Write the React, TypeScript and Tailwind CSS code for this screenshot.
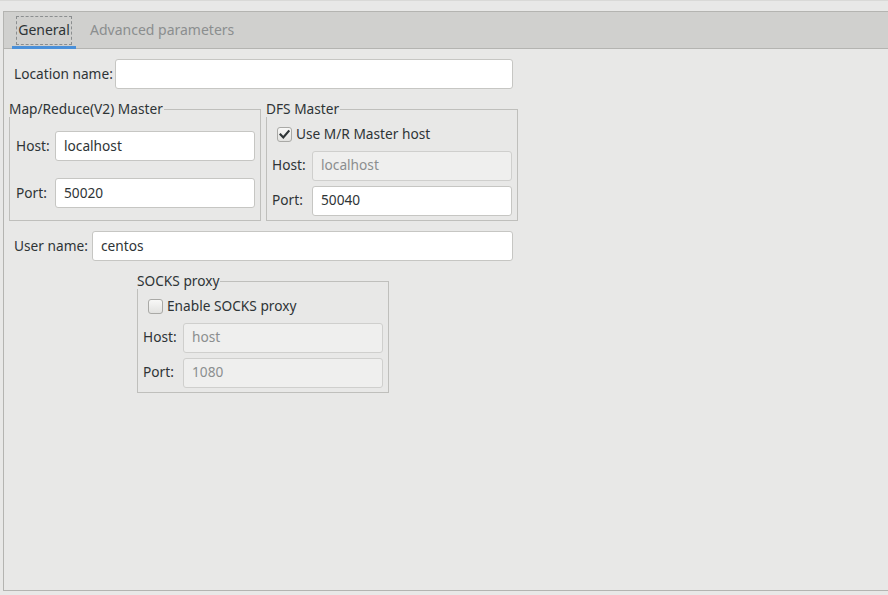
import React from "react";

const font = { fontFamily: '"Noto Sans", "DejaVu Sans", sans-serif' };

function Field({
  value,
  disabled,
  className,
}: {
  value: string;
  disabled?: boolean;
  className: string;
}) {
  return (
    <div
      className={
        "shrink-0 h-[30px] rounded-[3px] border flex items-center pl-[8px] text-[13.7px] " +
        (disabled
          ? "bg-[#efefee] border-[#cfcfcd] text-[#8b8e8f] "
          : "bg-white border-[#c6c6c3] text-[#2e3436] ") +
        className
      }
    >
      {value}
    </div>
  );
}

function Check({ checked }: { checked?: boolean }) {
  return (
    <div className="shrink-0 w-[15px] h-[15px] rounded-[3px] border border-[#a9a9a6] bg-gradient-to-b from-[#f8f8f7] to-[#e2e2e0] flex items-center justify-center">
      {checked && (
        <svg width="11" height="11" viewBox="0 0 11 11">
          <path d="M1.5 5.5 L4.3 8.4 L9.6 2.2" fill="none" stroke="#2e3436" strokeWidth="2.2" strokeLinecap="square" />
        </svg>
      )}
    </div>
  );
}

function Group({
  title,
  children,
}: {
  title: string;
  children: React.ReactNode;
}) {
  return (
    <div className="relative shrink-0 border border-[#bfbfbc] w-[252px] h-[112px]">
      <span className="absolute top-[-9px] left-[-1px] bg-[#e8e8e7] pr-[1px] leading-[16px] text-[13.7px] text-[#2e3436] whitespace-nowrap">
        {title}
      </span>
      {children}
    </div>
  );
}

function Label({ text, w }: { text: string; w: string }) {
  return <span className={"shrink-0 whitespace-nowrap " + w}>{text}</span>;
}

export default function App() {
  return (
    <div
      style={font}
      className="w-[888px] h-[595px] bg-[#e8e8e7] border-t border-[#d9d9d7] overflow-hidden text-[#2e3436]"
    >
      <div className="ml-[3px] mt-[10px] w-[885px] h-[580px] border-l border-t border-b border-[#b4b4b1]">
        {/* tab bar */}
        <div className="h-[37px] bg-[#d0d0ce] border-b border-[#b4b4b1] flex text-[14px]">
          <div className="relative ml-[8px] w-[64px] h-full flex items-center justify-center">
            <div className="absolute left-[4px] top-[4px] w-[56px] h-[29px] border border-dashed border-[#8b8e8f]" />
            <span className="text-[#2e3436] leading-none">General</span>
            <div className="absolute left-0 right-0 bottom-[-1px] h-[3px] bg-[#4a90d9]" />
          </div>
          <div className="ml-[8px] px-[6px] h-full flex items-center">
            <span className="text-[#8b8e8f] leading-none whitespace-nowrap">Advanced parameters</span>
          </div>
        </div>

        {/* content */}
        <div className="pt-[10px] text-[13.7px]">
          <div className="flex items-center ml-[10px]">
            <Label text="Location name:" w="w-[101px]" />
            <Field value="" className="w-[398px]" />
          </div>

          <div className="flex gap-[5px] ml-[5px] mt-[20px]">
            <Group title="Map/Reduce(V2) Master">
              <div className="flex items-center ml-[6px] mt-[21px]">
                <Label text="Host:" w="w-[39px]" />
                <Field value="localhost" className="w-[200px]" />
              </div>
              <div className="flex items-center ml-[6px] mt-[17px]">
                <Label text="Port:" w="w-[39px]" />
                <Field value="50020" className="w-[200px]" />
              </div>
            </Group>
            <Group title="DFS Master">
              <div className="flex items-center ml-[10px] mt-[14px] gap-[4px]">
                <Check checked />
                <span className="whitespace-nowrap">Use M/R Master host</span>
              </div>
              <div className="flex items-center ml-[5px] mt-[6px]">
                <Label text="Host:" w="w-[40px]" />
                <Field value="localhost" disabled className="w-[200px]" />
              </div>
              <div className="flex items-center ml-[5px] mt-[5px]">
                <Label text="Port:" w="w-[40px]" />
                <Field value="50040" className="w-[200px]" />
              </div>
            </Group>
          </div>

          <div className="flex items-center ml-[10px] mt-[10px]">
            <Label text="User name:" w="w-[78px]" />
            <Field value="centos" className="w-[421px]" />
          </div>

          <div className="flex ml-[133px] mt-[20px]">
            <Group title="SOCKS proxy">
              <div className="flex items-center ml-[10px] mt-[14px] gap-[4px]">
                <Check />
                <span className="whitespace-nowrap">Enable SOCKS proxy</span>
              </div>
              <div className="flex items-center ml-[5px] mt-[6px]">
                <Label text="Host:" w="w-[40px]" />
                <Field value="host" disabled className="w-[200px]" />
              </div>
              <div className="flex items-center ml-[5px] mt-[5px]">
                <Label text="Port:" w="w-[40px]" />
                <Field value="1080" disabled className="w-[200px]" />
              </div>
            </Group>
          </div>
        </div>
      </div>
    </div>
  );
}
